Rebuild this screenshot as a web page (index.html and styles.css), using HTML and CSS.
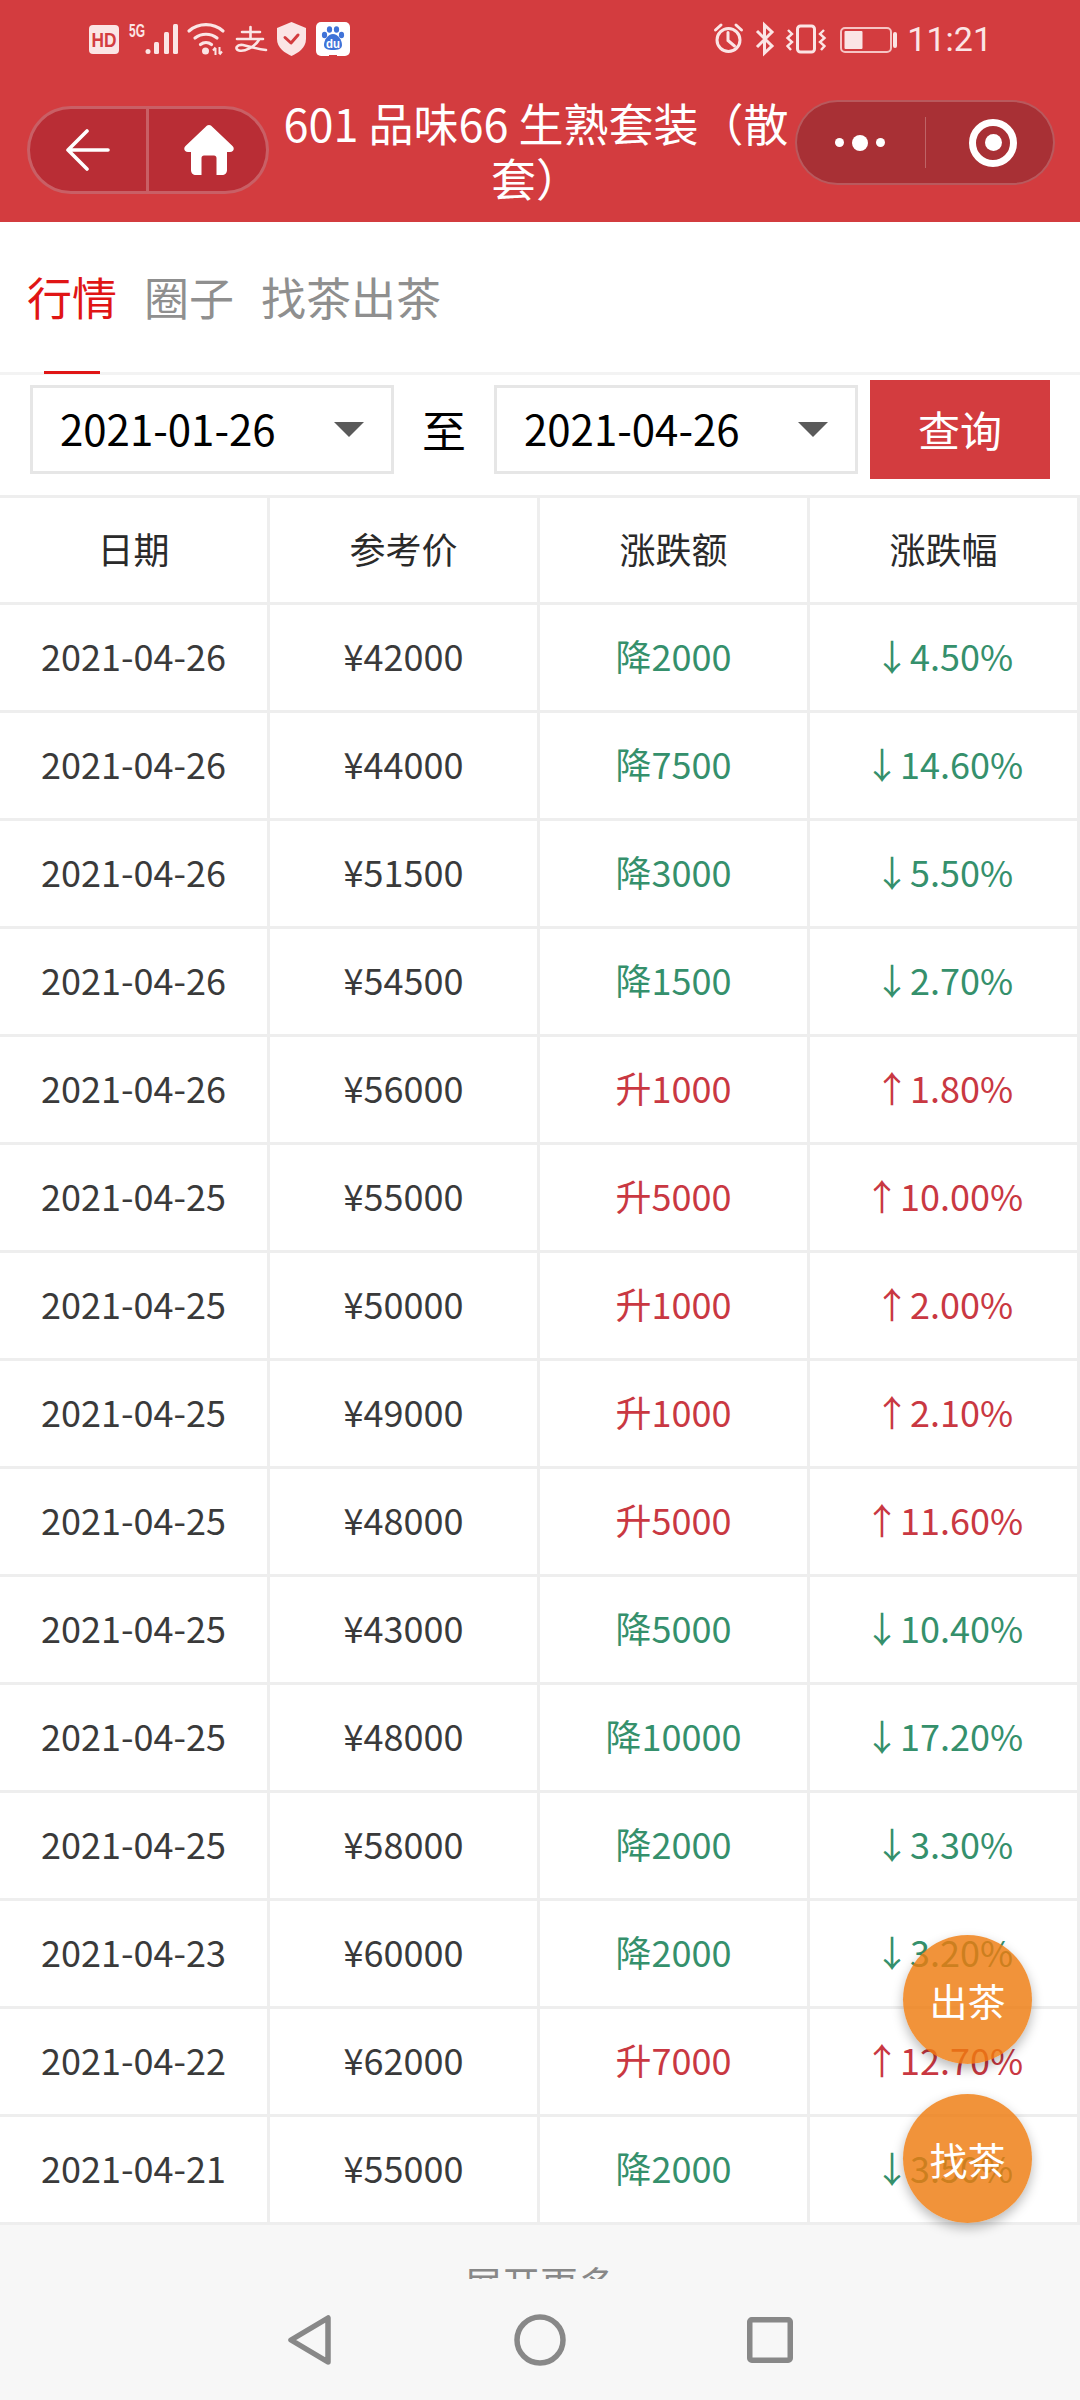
FILE: index.html
```html
<!DOCTYPE html>
<html lang="zh-CN">
<head>
<meta charset="utf-8">
<title>行情</title>
<link rel="stylesheet" href="styles.css">
</head>
<body>
<div class="page">
  <header class="top">
    <div class="status">
      <div class="status-left">
        <svg class="ic" width="30" height="34" viewBox="0 0 30 34"><rect x="0" y="3" width="30" height="29" rx="4" fill="#fbe5e5"/><text class="hd" x="15" y="25" text-anchor="middle" textLength="25" lengthAdjust="spacingAndGlyphs">HD</text></svg>
        <svg class="ic" width="49" height="34" viewBox="0 0 49 34"><text class="fiveg" x="0" y="15" textLength="16" lengthAdjust="spacingAndGlyphs">5G</text><circle cx="19" cy="29.500" r="2.500" fill="#fbe5e5"/><rect x="25" y="20" width="5" height="12" rx="1.500" fill="#fbe5e5"/><rect x="35" y="10" width="5" height="22" rx="1.500" fill="#fbe5e5"/><rect x="44" y="2" width="5" height="30" rx="1.500" fill="#fbe5e5"/></svg>
        <svg class="ic" width="37" height="34" viewBox="0 0 37 34"><g fill="none" stroke="#fbe5e5" stroke-width="3.200" stroke-linecap="round"><path d="M1 9A26 26 0 0 1 35 9"/><path d="M7 16A18 18 0 0 1 29 16"/><path d="M12.500 22.500A9 9 0 0 1 23.500 22.500"/></g><circle cx="17.500" cy="29" r="3.500" fill="#fbe5e5"/><path d="M27.500 26V33M25 28.500L27.500 25.500M31.500 32V25M34 29.500L31.500 32.500" fill="none" stroke="#fbe5e5" stroke-width="2"/></svg>
        <svg class="ic" width="32" height="34" viewBox="0 0 32 34"><path d="M7 10H25M15.500 5V17M2 17H28M24.500 17C20 25 9 30 4 28.500C-1 27 2 22 8 23C15 24.500 22 27 31 28" fill="none" stroke="#fbe5e5" stroke-width="2.600" stroke-linecap="round"/></svg>
        <svg class="ic" width="29" height="34" viewBox="0 0 29 34"><path d="M14.500 0L29 6V17C29 26 21 31 14.500 34C8 31 0 26 0 17V6Z" fill="#fbe5e5"/><path d="M8 15.500L14 21L21 13" fill="none" stroke="#d33c3f" stroke-width="3" stroke-linecap="round" stroke-linejoin="round"/></svg>
        <svg class="ic" width="34" height="34" viewBox="0 0 34 34"><rect width="34" height="34" rx="5" fill="#fff"/><g fill="#3f73d8"><ellipse cx="8.500" cy="13" rx="2.600" ry="3.200"/><ellipse cx="13.500" cy="7.500" rx="2.600" ry="3.200"/><ellipse cx="20.500" cy="7.500" rx="2.600" ry="3.200"/><ellipse cx="25.500" cy="13" rx="2.600" ry="3.200"/><path d="M17 12C22 12 26 18 26 23C26 27 22 28 17 28C12 28 8 27 8 23C8 18 12 12 17 12Z"/></g><text class="du" x="17" y="26" text-anchor="middle" textLength="14" lengthAdjust="spacingAndGlyphs">du</text><rect x="13" y="33" width="8" height="1" fill="#d33c3f"/></svg>
      </div>
      <div class="status-right">
        <svg class="ic" width="29" height="34" viewBox="0 0 29 34"><circle cx="14.500" cy="18" r="11.500" fill="none" stroke="#fbe5e5" stroke-width="3"/><path d="M14 10.500V18.500L20.500 24M1.500 8L7 3M27.500 8L22 3" fill="none" stroke="#fbe5e5" stroke-width="3" stroke-linecap="round"/></svg>
        <svg class="ic" width="19" height="34" viewBox="0 0 19 34"><path d="M2 9L17 24L9.500 31V3L17 10L2 25" fill="none" stroke="#fbe5e5" stroke-width="3"/></svg>
        <svg class="ic" width="40" height="34" viewBox="0 0 40 34"><rect x="11.500" y="4" width="17" height="26" rx="3" fill="none" stroke="#fbe5e5" stroke-width="3"/><path d="M2 8L6 12L1.500 16L6 20L1.500 24L5 28M38 8L34 12L38.500 16L34 20L38.500 24L35 28" fill="none" stroke="#fbe5e5" stroke-width="2.400"/></svg>
        <svg class="ic" width="60" height="34" viewBox="0 0 60 34"><rect x="3" y="6" width="50" height="24" rx="4" fill="none" stroke="#f6c4c4" stroke-width="2"/><rect x="6.500" y="9" width="18" height="18" rx="1" fill="#fbe5e5"/><rect x="55" y="10" width="4" height="16" rx="2" fill="#fbe5e5"/></svg>
        <span class="time">11:21</span>
      </div>
    </div>
    <div class="navbar">
      <div class="capsule-left">
        <span class="cap-btn cap-btn-first"><svg width="44" height="42" viewBox="0 0 44 42"><path d="M42 21H3M21 2L2 21L21 40" fill="none" stroke="#fff" stroke-width="3.600" stroke-linecap="round" stroke-linejoin="round"/></svg></span>
        <span class="cap-btn cap-btn-home"><svg width="50" height="50" viewBox="0 0 50 50"><path d="M25 0C26.500 0 27.500 .8 28.500 2L48.500 21C51 23.500 49.500 27 46 27H43V45C43 48 41 50 38 50H32.500V33C32.500 31.500 31.500 30.500 30 30.500H20C18.500 30.500 17.500 31.500 17.500 33V50H12C9 50 7 48 7 45V27H4C.5 27 -1 23.500 1.500 21L21.500 2C22.500 .8 23.500 0 25 0Z" fill="#fff"/></svg></span>
      </div>
      <h1 class="title">601 品味66 生熟套装（散套）</h1>
      <div class="capsule-right">
        <span class="dots"><i class="dot"></i><i class="dot dot-big"></i><i class="dot"></i></span>
        <span class="cap-rule"></span>
        <span class="target"><i class="target-core"></i></span>
      </div>
    </div>
  </header>

  <nav class="tabs">
    <span class="tab tab-on">行情</span>
    <span class="tab">圈子</span>
    <span class="tab">找茶出茶</span>
  </nav>

  <div class="filter">
    <div class="select"><span>2021-01-26</span><i class="caret"></i></div>
    <span class="to">至</span>
    <div class="select"><span>2021-04-26</span><i class="caret"></i></div>
    <button class="query" type="button">查询</button>
  </div>

  <table class="grid">
    <thead>
      <tr><th>日期</th><th>参考价</th><th>涨跌额</th><th>涨跌幅</th></tr>
    </thead>
    <tbody>
      <tr><td>2021-04-26</td><td>¥42000</td><td class="down">降2000</td><td class="down">↓4.50%</td></tr>
      <tr><td>2021-04-26</td><td>¥44000</td><td class="down">降7500</td><td class="down">↓14.60%</td></tr>
      <tr><td>2021-04-26</td><td>¥51500</td><td class="down">降3000</td><td class="down">↓5.50%</td></tr>
      <tr><td>2021-04-26</td><td>¥54500</td><td class="down">降1500</td><td class="down">↓2.70%</td></tr>
      <tr><td>2021-04-26</td><td>¥56000</td><td class="up">升1000</td><td class="up">↑1.80%</td></tr>
      <tr><td>2021-04-25</td><td>¥55000</td><td class="up">升5000</td><td class="up">↑10.00%</td></tr>
      <tr><td>2021-04-25</td><td>¥50000</td><td class="up">升1000</td><td class="up">↑2.00%</td></tr>
      <tr><td>2021-04-25</td><td>¥49000</td><td class="up">升1000</td><td class="up">↑2.10%</td></tr>
      <tr><td>2021-04-25</td><td>¥48000</td><td class="up">升5000</td><td class="up">↑11.60%</td></tr>
      <tr><td>2021-04-25</td><td>¥43000</td><td class="down">降5000</td><td class="down">↓10.40%</td></tr>
      <tr><td>2021-04-25</td><td>¥48000</td><td class="down">降10000</td><td class="down">↓17.20%</td></tr>
      <tr><td>2021-04-25</td><td>¥58000</td><td class="down">降2000</td><td class="down">↓3.30%</td></tr>
      <tr><td>2021-04-23</td><td>¥60000</td><td class="down">降2000</td><td class="down">↓3.20%</td></tr>
      <tr><td>2021-04-22</td><td>¥62000</td><td class="up">升7000</td><td class="up">↑12.70%</td></tr>
      <tr><td>2021-04-21</td><td>¥55000</td><td class="down">降2000</td><td class="down">↓3.50%</td></tr>
    </tbody>
  </table>

  <div class="more"><span>展开更多</span></div>

  <footer class="sysnav">
    <svg width="60" height="60" viewBox="0 0 60 60"><path d="M48 8V52L11 30Z" class="sys"/></svg>
    <svg width="60" height="60" viewBox="0 0 60 60"><circle cx="30" cy="30" r="23" class="sys"/></svg>
    <svg width="60" height="60" viewBox="0 0 60 60"><rect x="9.750" y="9.750" width="40.500" height="40.500" rx="2" class="sys"/></svg>
  </footer>

  <a class="fab fab-sell">出茶</a>
  <a class="fab fab-find">找茶</a>
</div>
</body>
</html>
```

FILE: styles.css
```css
* { box-sizing: border-box; }
html, body { margin: 0; padding: 0; }
body { font-family: "Noto Sans CJK SC", "Noto Sans", sans-serif; background: #fff; }

.page {
  position: relative;
  width: 1080px;
  height: 2400px;
  overflow: hidden;
  display: flex;
  flex-direction: column;
}

.top { height: 222px; background: #d33c3f; color: #fff; flex: none; }

.status {
  height: 78px;
  padding: 0 88px 0 89px;
  display: flex;
  align-items: center;
  justify-content: space-between;
}
.status-left, .status-right { display: flex; align-items: center; gap: 10px; }
.status-right { gap: 12px; }
.ic { display: block; flex: none; overflow: visible; }
.hd { font: bold 20px "Liberation Sans", sans-serif; fill: #d33c3f; }
.fiveg { font: bold 19px "Liberation Sans", sans-serif; fill: #fbe5e5; }
.du { font: bold 13px "Liberation Sans", sans-serif; fill: #fff; }
.time { font: 400 34px/34px Roboto, sans-serif; color: #fbe5e5; margin-left: -3px; }

.navbar {
  height: 144px;
  padding: 0 25px 0 27px;
  display: flex;
  align-items: center;
}
.capsule-left {
  width: 242px;
  height: 88px;
  flex: none;
  display: flex;
  background: #b92d35;
  border: 3px solid rgba(255, 255, 255, .24);
  border-radius: 44px;
}
.cap-btn { flex: 1; display: flex; align-items: center; justify-content: center; }
.cap-btn svg { display: block; }
.cap-btn-first { flex: none; width: 119px; border-right: 3px solid rgba(255, 255, 255, .24); }
.cap-btn-home { padding-left: 3px; }

.title {
  flex: 1;
  margin: 0;
  padding-left: 8px;
  font-size: 45px;
  font-weight: 400;
  line-height: 55px;
  text-align: center;
}

.capsule-right {
  width: 260px;
  height: 85px;
  flex: none;
  margin-bottom: 15px;
  display: flex;
  align-items: center;
  background: #a83035;
  border: 2px solid rgba(255, 255, 255, .2);
  border-radius: 43px;
}
.dots { width: 126px; display: flex; align-items: center; justify-content: center; gap: 8px; }
.dot { width: 9px; height: 9px; border-radius: 50%; background: #fff; }
.dot-big { width: 16px; height: 16px; }
.cap-rule { width: 1px; height: 51px; margin-left: 2px; background: rgba(255, 255, 255, .25); }
.target {
  width: 48px;
  height: 48px;
  margin-left: 43px;
  border: 7px solid #fff;
  border-radius: 50%;
  display: flex;
  align-items: center;
  justify-content: center;
}
.target-core { width: 17px; height: 17px; border-radius: 50%; background: #fff; }

.tabs {
  height: 153px;
  flex: none;
  padding: 0 0 0 27px;
  border-bottom: 3px solid #f3f3f3;
  display: flex;
  align-items: center;
  gap: 27px;
  color: #8f8f8f;
  font-size: 45px;
  line-height: 60px;
}
.tab { position: relative; }
.tab-on { color: #e01515; }
.tab-on::after {
  content: "";
  position: absolute;
  left: 17px;
  top: 104px;
  width: 56px;
  height: 3px;
  background: #e01515;
}

.filter {
  height: 120px;
  flex: none;
  padding: 5px 0 0 30px;
  display: flex;
  align-items: flex-start;
}
.select {
  width: 364px;
  height: 89px;
  margin-top: 5px;
  padding: 0 27px 3px 27px;
  border: 3px solid #e6e6e6;
  display: flex;
  align-items: center;
  justify-content: space-between;
  font-size: 42px;
  line-height: 60px;
  color: #000;
}
.caret {
  width: 0;
  height: 0;
  margin-top: 3px;
  border-left: 15px solid transparent;
  border-right: 15px solid transparent;
  border-top: 15px solid #5a5a5a;
}
.to { width: 100px; height: 99px; font-size: 44px; line-height: 99px; text-align: center; color: #000; }
.query {
  width: 180px;
  height: 99px;
  margin-left: 12px;
  padding: 0 0 3px;
  border: 0;
  background: #d33c3f;
  color: #fff;
  font-family: inherit;
  font-size: 42px;
}

.grid {
  width: 1080px;
  flex: none;
  table-layout: fixed;
  border-collapse: separate;
  border-spacing: 0;
  border-top: 3px solid #eeeeee;
  font-size: 36px;
  color: #3a3a3a;
  text-align: center;
}
.grid th, .grid td {
  padding: 0 0 5px;
  height: 108px;
  border-right: 3px solid #eeeeee;
  border-bottom: 3px solid #eeeeee;
  font-weight: 400;
  line-height: 50px;
}
.grid th { height: 107px; color: #2a2a2a; }
.grid .down { color: #35906c; }
.grid .up { color: #c93842; }

.more {
  height: 54px;
  flex: none;
  padding-top: 39px;
  overflow: hidden;
  background: #f7f7f7;
  color: #888;
  font-size: 38px;
  line-height: 38px;
  text-align: center;
}

.sysnav {
  flex: 1;
  background: #f7f7f7;
  display: flex;
  align-items: center;
  justify-content: center;
  gap: 170px;
}
.sysnav svg { display: block; }
.sys { fill: none; stroke: #888; stroke-width: 5.5; stroke-linejoin: round; }

.fab {
  position: absolute;
  right: 48px;
  width: 129px;
  height: 129px;
  border-radius: 50%;
  background: rgba(238, 123, 15, .82);
  box-shadow: 0 5px 12px rgba(0, 0, 0, .28);
  color: #fff;
  font-size: 38px;
  line-height: 129px;
  text-align: center;
}
.fab-sell { top: 1935px; }
.fab-find { top: 2094px; }
```
